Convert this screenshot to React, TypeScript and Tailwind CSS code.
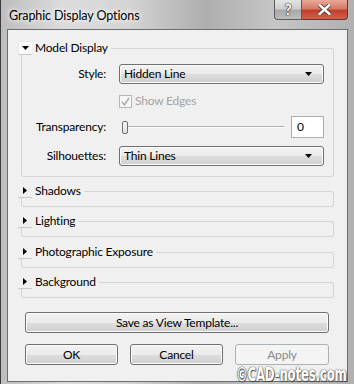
import type { ReactNode } from "react";
import clsx from "clsx";

const ui = "font-['Segoe_UI','Lato',sans-serif] text-[12px] leading-none tracking-[-0.2px]";

function DownArrow({ className }: { className?: string }) {
  return (
    <svg width="7" height="4" viewBox="0 0 7 4" className={className} aria-hidden>
      <path d="M0 0h7L3.5 4z" fill="#000" />
    </svg>
  );
}

function RightArrow() {
  return (
    <svg width="4" height="7" viewBox="0 0 4 7" aria-hidden>
      <path d="M0 0v7l4-3.5z" fill="#000" />
    </svg>
  );
}

/** collapsible group header + etched box, like the Revit dialog */
function Group({
  title,
  open,
  children,
}: {
  title: string;
  open?: boolean;
  children?: ReactNode;
}) {
  return (
    <div className="flex flex-col">
      <div className="flex h-[14px] items-stretch">
        <div
          className={clsx(
            "flex w-[14px] shrink-0 items-center justify-center border-b border-[#c9c9c9]",
            open && "bg-[#fbfbfb] border-l border-t border-l-[#e8e8e8] border-t-[#e8e8e8]",
          )}
        >
          {open ? <DownArrow /> : <RightArrow />}
        </div>
        <span className="flex items-center px-[3px] text-black">{title}</span>
        <div className="mt-[7px] flex-1 rounded-tr-[3px] border-r border-t border-[#d5d5d5]" />
      </div>
      <div
        className={clsx(
          "ml-[3px] rounded-b-[3px] border-b border-l border-r border-[#d5d5d5]",
          open ? "pb-[10px] pr-[9px] pt-[9px]" : "h-[9px]",
        )}
      >
        {children}
      </div>
    </div>
  );
}

function Combo({ value }: { value: string }) {
  return (
    <div className="flex h-[20px] items-center justify-between rounded-[3px] border border-[#707070] bg-[linear-gradient(#f2f2f2_0%,#ebebeb_50%,#dddddd_51%,#cfcfcf_100%)] pl-[4px] pr-[11px] shadow-[inset_0_0_0_1px_#fbfbfb]">
      <span>{value}</span>
      <DownArrow />
    </div>
  );
}

function Btn({
  children,
  disabled,
  className,
}: {
  children: ReactNode;
  disabled?: boolean;
  className?: string;
}) {
  return (
    <button
      type="button"
      className={clsx(
        "flex h-[21px] items-center justify-center rounded-[3px] border",
        disabled
          ? "border-[#adb2b5] bg-[#f4f4f4] text-[#8a8a8a]"
          : "border-[#707070] bg-[linear-gradient(#f2f2f2_0%,#ebebeb_50%,#dddddd_51%,#cfcfcf_100%)] text-black shadow-[inset_0_0_0_1px_#fcfcfc]",
        className,
      )}
    >
      {children}
    </button>
  );
}

export default function App() {
  return (
    <div
      className={clsx(
        ui,
        "relative flex h-[384px] w-[354px] flex-col overflow-hidden border-l border-[#3c3c3c] bg-[linear-gradient(90deg,#bdbdbd_0%,#dcdcdc_18%,#d4d4d4_36%,#aeaeae_58%,#c6c6c6_78%,#b0b0b0_100%)]",
      )}
    >
      {/* title bar */}
      <div className="flex h-[29px] shrink-0 items-start">
        <span className="pl-[8px] pt-[10px] text-[12.5px] tracking-[-0.1px] text-black [text-shadow:0_0_8px_#fff,0_0_4px_#fff]">
          Graphic Display Options
        </span>
        <div className="ml-auto mr-[6px] flex">
          <div className="flex h-[20px] w-[28px] items-center justify-center rounded-bl-[4px] border border-t-0 border-[#5b5b5b] bg-[linear-gradient(#e4e4e4_0%,#cfcfcf_45%,#a9a9a9_55%,#bdbdbd_100%)] text-[15px] font-bold text-white [text-shadow:0_0_1px_#333,0_0_1px_#333,0_0_2px_#333]">
            ?
          </div>
          <div className="flex h-[20px] w-[46px] items-center justify-center rounded-br-[4px] border border-l-0 border-t-0 border-[#5b3a36] bg-[linear-gradient(#e9a998_0%,#d8796a_45%,#c2402c_55%,#d2604a_100%)]">
            <svg width="13" height="11" viewBox="0 0 13 11" aria-hidden>
              <path
                d="M1.5 1l10 9M11.5 1l-10 9"
                stroke="#4a2a25"
                strokeWidth="4"
                strokeLinecap="round"
              />
              <path
                d="M1.5 1l10 9M11.5 1l-10 9"
                stroke="#fff"
                strokeWidth="2.4"
                strokeLinecap="round"
              />
            </svg>
          </div>
        </div>
      </div>

      {/* client area */}
      <div className="ml-[6px] flex h-[353px] w-[341px] flex-col border border-[#6d6d6d] bg-[#f0f0f0] pl-[10px] pr-[13px] pt-[11px]">
        <Group title="Model Display" open>
          <div className="grid grid-cols-[84px_1fr] items-center gap-x-[13px]">
            <span className="text-right">Style:</span>
            <Combo value="Hidden Line" />

            <span />
            <div className="mt-[10px] flex h-[14px] items-center gap-[3px] text-[#a3a3a3]">
              <span className="flex h-[13px] w-[13px] items-center justify-center border border-[#b6b6b6] bg-[#f6f6f6]">
                <svg width="9" height="9" viewBox="0 0 9 9" aria-hidden>
                  <path d="M1 5l2.5 3L8 1" stroke="#a8a8a8" strokeWidth="1.4" fill="none" />
                </svg>
              </span>
              Show Edges
            </div>

            <span className="mt-[8px] text-right">Transparency:</span>
            <div className="mt-[8px] flex h-[22px] items-center">
              <div className="flex flex-1 items-center pl-[3px]">
                <div className="h-[13px] w-[6px] shrink-0 rounded-[2px] border border-[#707070] bg-[linear-gradient(#fafafa,#dedede)]" />
                <div className="h-[2px] flex-1 border-t border-[#b0b0b0] bg-white" />
              </div>
              <div className="ml-[7px] flex h-[22px] w-[33px] items-center border border-[#abadb3] bg-white pl-[5px]">
                0
              </div>
            </div>

            <span className="mt-[8px] text-right">Silhouettes:</span>
            <div className="mt-[8px]">
              <Combo value="Thin Lines" />
            </div>
          </div>
        </Group>
        <div className="mt-[7px]">
          <Group title="Shadows" />
        </div>
        <div className="mt-[7px]">
          <Group title="Lighting" />
        </div>
        <div className="mt-[8px]">
          <Group title="Photographic Exposure" />
        </div>
        <div className="mt-[7px]">
          <Group title="Background" />
        </div>

        <div className="ml-[7px] mr-[5px] mt-[14px] flex flex-col gap-[11px]">
          <Btn>Save as View Template...</Btn>
          <div className="flex gap-[12px]">
            <Btn className="w-[93px]">OK</Btn>
            <Btn className="w-[93px]">Cancel</Btn>
            <Btn disabled className="w-[94px]">
              Apply
            </Btn>
          </div>
        </div>
      </div>

      {/* watermark */}
      <span className="absolute bottom-[0px] right-[7px] origin-right scale-x-[0.62] font-['DejaVu_Sans',sans-serif] text-[19px] font-bold leading-none tracking-[-0.3px] text-white [text-shadow:0_0_1px_#444,0_0_2px_#555,1px_1px_1px_#444]">
        ©CAD-notes.com
      </span>
    </div>
  );
}
